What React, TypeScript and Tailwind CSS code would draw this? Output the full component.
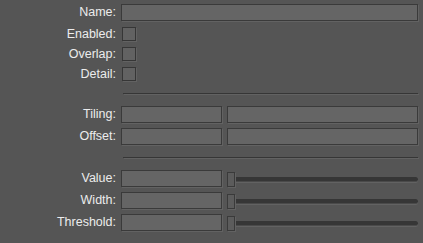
import React from "react";

const labelCls = "w-[116px] shrink-0 text-right leading-none";

function Field({ className = "" }: { className?: string }) {
  return (
    <div
      className={`h-[17px] border border-[#3a3a3a] bg-[#656565] shadow-[1px_1px_0_#626262] ${className}`}
    />
  );
}

function Check() {
  return (
    <div className="ml-[1px] h-[14px] w-[14px] border border-[#363636] bg-[#626262] shadow-[1px_1px_0_#626262]" />
  );
}

function Slider() {
  return (
    <div className="relative flex h-[17px] flex-1 items-center">
      <div className="mt-[1px] h-[5px] w-full rounded-r-full border-b border-[#4a4a4a] bg-[#363636] shadow-[0_1px_0_#626262]" />
      <div className="absolute left-0 top-[2px] h-[15px] w-[8px] border border-[#3a3a3a] bg-[#5c5c5c] shadow-[1px_1px_0_#626262]" />
    </div>
  );
}

function Row({
  label,
  h = "h-[17px]",
  className = "",
  children,
}: {
  label: string;
  h?: string;
  className?: string;
  children: React.ReactNode;
}) {
  return (
    <div className={`flex items-center ${h} ${className}`}>
      <div className={labelCls}>{label}</div>
      <div className="ml-[5px] flex flex-1 items-center">{children}</div>
    </div>
  );
}

function Separator({ className = "" }: { className?: string }) {
  return (
    <div className={`ml-[123px] h-[1px] bg-[#363636] shadow-[1px_1px_0_#626262] ${className}`} />
  );
}

export default function App() {
  return (
    <div className="h-[243px] w-[423px] overflow-hidden bg-[#555555] pt-[4px] pr-[5px] font-['Liberation_Sans',Arial,sans-serif] text-[12.5px] text-[#ececec]">
      <Row label="Name:">
        <Field className="w-full" />
      </Row>
      <Row label="Enabled:" h="h-[20px]" className="mt-[3px]">
        <Check />
      </Row>
      <Row label="Overlap:" h="h-[20px]">
        <Check />
      </Row>
      <Row label="Detail:" h="h-[20px]">
        <Check />
      </Row>

      <Separator className="mt-[9px]" />

      <Row label="Tiling:" className="mt-[12px]">
        <div className="grid w-full grid-cols-[101px_1fr] gap-x-[5px]">
          <Field />
          <Field />
        </div>
      </Row>
      <Row label="Offset:" className="mt-[5px]">
        <div className="grid w-full grid-cols-[101px_1fr] gap-x-[5px]">
          <Field />
          <Field />
        </div>
      </Row>

      <Separator className="mt-[12px]" />

      {["Value:", "Width:", "Threshold:"].map((l, i) => (
        <Row key={l} label={l} className={i === 0 ? "mt-[12px]" : "mt-[5px]"}>
          <div className="flex w-full gap-x-[5px]">
            <Field className="w-[101px] shrink-0" />
            <Slider />
          </div>
        </Row>
      ))}
    </div>
  );
}
